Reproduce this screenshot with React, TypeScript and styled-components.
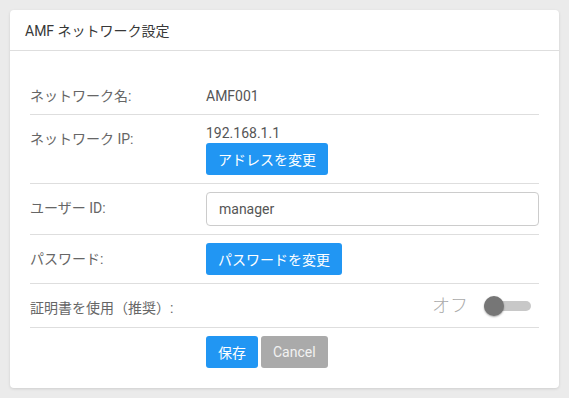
import React, { useState } from "react";
import styled, { createGlobalStyle } from "styled-components";

const GlobalStyle = createGlobalStyle`
    html, body {
        margin: 0;
        padding: 0;
        background: #ebebeb;
        font-family: Roboto, "Noto Sans CJK JP", sans-serif;
    }
`;

const Page = styled.div`
    padding: 10px;
`;

const Card = styled.section`
    background: #fff;
    border-radius: 4px;
    box-shadow: 0 1px 3px rgba(0, 0, 0, 0.12);
`;

const Header = styled.h2`
    margin: 0;
    height: 40px;
    padding: 0 15px;
    display: flex;
    align-items: center;
    border-bottom: 1px solid #dedede;
    font-size: 14px;
    font-weight: 400;
    color: #383838;
`;

const Body = styled.div`
    padding: 21px 20px 20px 20px;
`;

const Row = styled.div<{ $last?: boolean }>`
    display: grid;
    grid-template-columns: 176px 1fr;
    border-bottom: ${(p) => (p.$last ? "none" : "1px solid #dedede")};
    font-size: 14px;
    line-height: 20px;
`;

const Label = styled.div`
    padding: 14px 0 8px;
    color: #666;
`;

const Value = styled.div<{ $static?: boolean }>`
    padding: ${(p) => (p.$static ? "14px 0 8px" : "8px 0")};
    color: #555;
    display: flex;
    flex-direction: column;
    align-items: flex-start;
`;

const Actions = styled.div`
    display: flex;
    gap: 3px;
    padding: 8px 0 0;
`;

const Button = styled.button<{ $variant?: "primary" | "muted" }>`
    height: 32px;
    padding: 0 12px;
    border: none;
    border-radius: 3px;
    font-family: inherit;
    font-size: 14px;
    cursor: pointer;
    background: ${(p) => (p.$variant === "muted" ? "#aaaaaa" : "#2196f3")};
    color: ${(p) => (p.$variant === "muted" ? "#f2f2f2" : "#fff")};
`;

const TextInput = styled.input`
    box-sizing: border-box;
    width: 100%;
    height: 34px;
    padding: 0 12px;
    border: 1px solid #cccccc;
    border-radius: 4px;
    font-family: inherit;
    font-size: 14px;
    color: #555;
    outline: none;
`;

const SwitchCell = styled.div`
    padding: 8px 8px 8px 0;
    height: 27px;
    display: flex;
    align-items: center;
    justify-content: flex-end;
`;

const SwitchText = styled.span`
    font-size: 18px;
    font-weight: 300;
    color: #aaa;
    margin-right: 16px;
`;

const Track = styled.button<{ $on: boolean }>`
    position: relative;
    width: 47px;
    height: 10px;
    padding: 0;
    border: none;
    border-radius: 5px;
    background: ${(p) => (p.$on ? "#90caf9" : "#c8c8c8")};
    cursor: pointer;
`;

const Knob = styled.span<{ $on: boolean }>`
    position: absolute;
    top: -5px;
    left: ${(p) => (p.$on ? "27px" : "0")};
    width: 20px;
    height: 20px;
    border-radius: 50%;
    background: ${(p) => (p.$on ? "#2196f3" : "#767676")};
    box-shadow: 0 1px 2px rgba(0, 0, 0, 0.35);
`;

export default function App() {
    const [useCert, setUseCert] = useState(false);
    const [user, setUser] = useState("manager");

    return (
        <Page>
            <GlobalStyle />
            <Card>
                <Header>AMF ネットワーク設定</Header>
                <Body>
                    <Row>
                        <Label>ネットワーク名:</Label>
                        <Value $static>AMF001</Value>
                    </Row>
                    <Row>
                        <Label>ネットワーク IP:</Label>
                        <Value>
                            192.168.1.1
                            <Button type="button">アドレスを変更</Button>
                        </Value>
                    </Row>
                    <Row>
                        <Label>ユーザー ID:</Label>
                        <Value>
                            <TextInput value={user} onChange={(e) => setUser(e.target.value)} />
                        </Value>
                    </Row>
                    <Row>
                        <Label>パスワード:</Label>
                        <Value>
                            <Button type="button">パスワードを変更</Button>
                        </Value>
                    </Row>
                    <Row>
                        <Label>証明書を使用（推奨）:</Label>
                        <SwitchCell>
                            <SwitchText>{useCert ? "オン" : "オフ"}</SwitchText>
                            <Track type="button" $on={useCert} aria-label="証明書を使用" onClick={() => setUseCert(!useCert)}>
                                <Knob $on={useCert} />
                            </Track>
                        </SwitchCell>
                    </Row>
                    <Row $last>
                        <div />
                        <Actions>
                            <Button type="button">保存</Button>
                            <Button type="button" $variant="muted">Cancel</Button>
                        </Actions>
                    </Row>
                </Body>
            </Card>
        </Page>
    );
}
